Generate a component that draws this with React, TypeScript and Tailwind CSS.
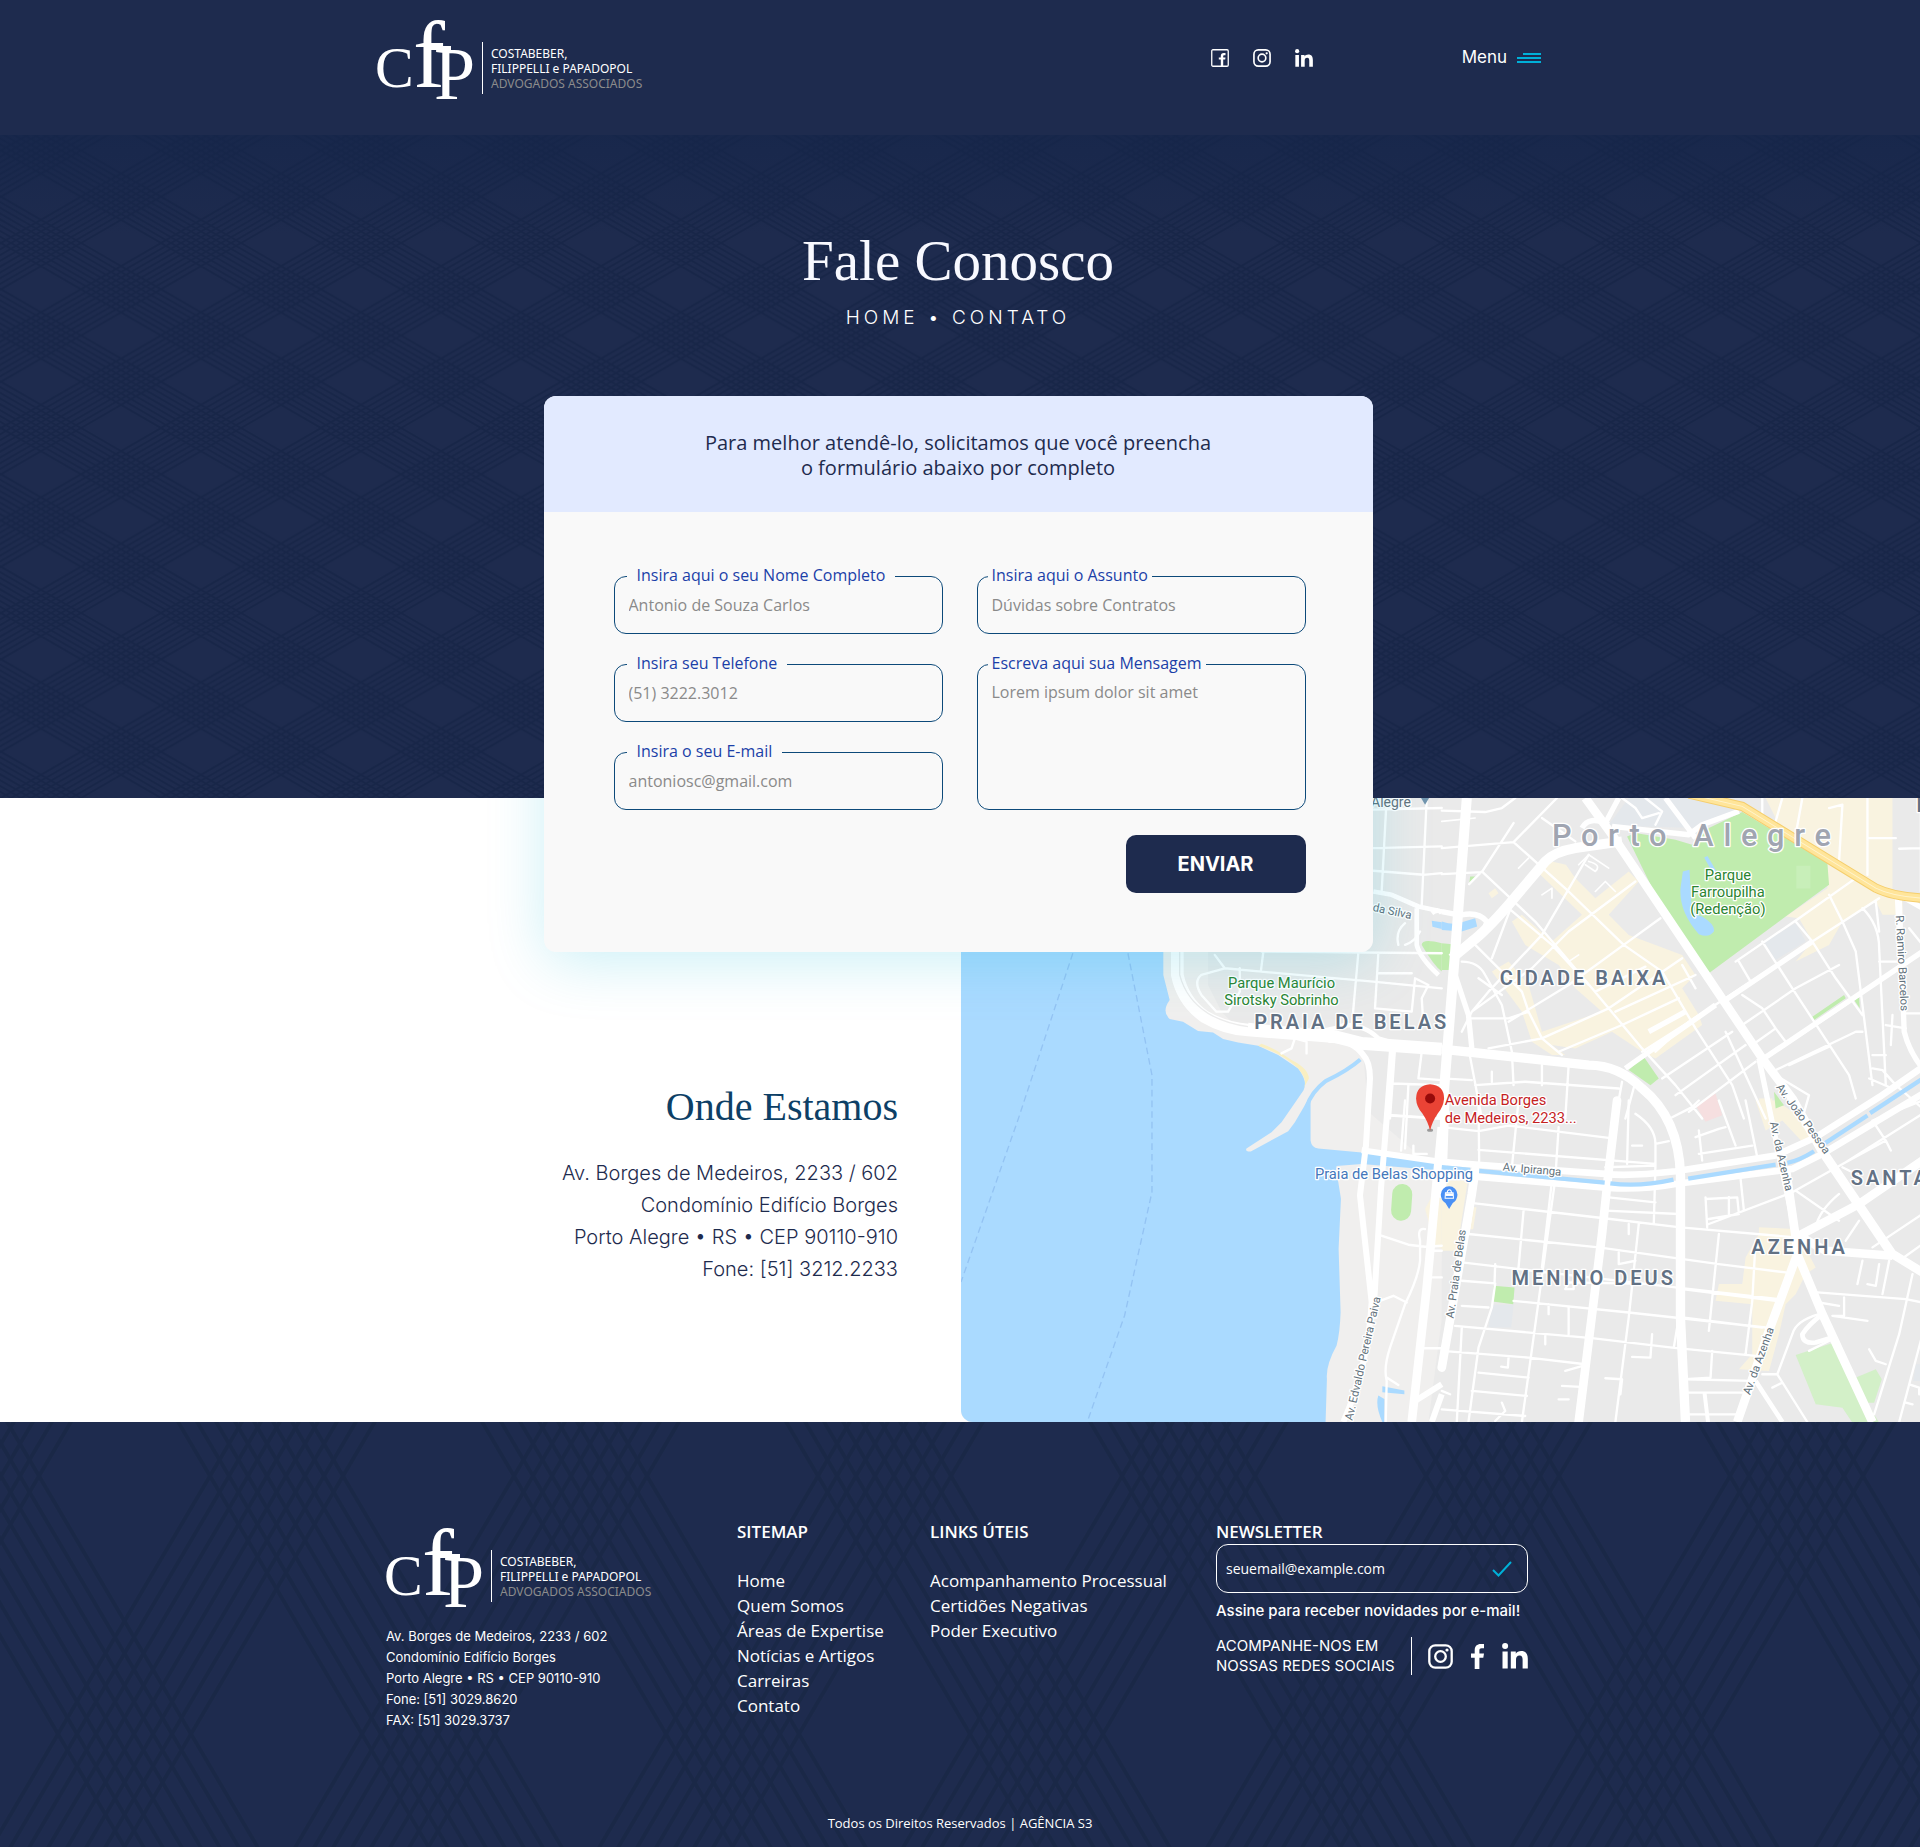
import React from "react";

const SANS = "font-['Inter',sans-serif]";
const BODY = "font-['Open_Sans',sans-serif]";
const SERIF = "font-['Liberation_Serif',serif]";

function HeroPattern() {
  const steps = [0, 10, 20, 30, 40, 50, 60, 70, 80];
  return (
    <svg className="absolute inset-0 h-full w-full" aria-hidden="true">
      <defs>
        <pattern id="lattice" width="160" height="92.5" patternUnits="userSpaceOnUse" patternTransform="translate(1 15.5)">
          <g stroke="#182648" strokeWidth="2">
            {steps.map((d) => (
              <path
                key={d}
                d={`M${d} 0l-160 92.5M${d + 160} 0l-160 92.5M${d} 0l160 92.5M${d - 160} 0l160 92.5`}
              />
            ))}
          </g>
        </pattern>
        <linearGradient id="heroShade" x1="0" y1="0" x2="0" y2="1">
          <stop offset="0" stopColor="#14254a" stopOpacity="0.6" />
          <stop offset="0.15" stopColor="#14254a" stopOpacity="0" />
        </linearGradient>
      </defs>
      <rect width="100%" height="100%" fill="url(#lattice)" />
      <rect width="100%" height="100%" fill="url(#heroShade)" />
    </svg>
  );
}

function FooterPattern() {
  const steps = [0, 19, 38, 57, 76, 95, 114, 133];
  return (
    <svg className="absolute inset-0 h-full w-full" aria-hidden="true">
      <defs>
        <pattern id="weave" width="304" height="516" patternUnits="userSpaceOnUse" patternTransform="translate(58 -204)">
          <g stroke="#1a2847" strokeWidth="4">
            {steps.map((d) => (
              <path
                key={d}
                d={`M${d} 0l-304 516M${d + 304} 0l-304 516M${d} 0l304 516M${d - 304} 0l304 516`}
              />
            ))}
          </g>
        </pattern>
      </defs>
      <rect width="100%" height="100%" fill="url(#weave)" />
    </svg>
  );
}

function Logo() {
  return (
    <svg className="h-[86px] w-[270px] text-white" viewBox="0 0 270 86" role="img" aria-label="Costabeber, Filippelli e Papadopol Advogados Associados">
      <g fill="currentColor" fontFamily="Liberation Serif, serif">
        <text x="-2" y="71" fontSize="58">C</text>
        <text x="36" y="71" fontSize="96">f</text>
        <text x="57" y="83" fontSize="74">P</text>
        <rect x="52" y="30" width="22" height="4" />
      </g>
      <rect x="105" y="26" width="1" height="52" fill="currentColor" />
      <g fontFamily="Noto Sans, sans-serif" fontSize="12">
        <text x="114" y="42" fill="currentColor">COSTABEBER,</text>
        <text x="114" y="57" fill="currentColor">FILIPPELLI e PAPADOPOL</text>
        <text x="114" y="72" fill="#8c8c8c">ADVOGADOS ASSOCIADOS</text>
      </g>
    </svg>
  );
}

function FacebookBox({ className }: { className: string }) {
  return (
    <svg className={className} viewBox="0 0 18 18" fill="none" aria-hidden="true">
      <rect x="0.75" y="0.75" width="16.5" height="16.5" rx="1.2" stroke="#fff" strokeWidth="1.3" />
      <path d="M9.8 17.2V10.600H7.800V8.400H9.800V6.900C9.800 5 10.900 4 12.700 4H14.500V6.200H13.300C12.500 6.200 12.200 6.600 12.200 7.300V8.400H14.500L14.200 10.600H12.200V17.200Z" fill="#fff" />
    </svg>
  );
}

function Instagram({ className }: { className: string }) {
  return (
    <svg className={className} viewBox="0 0 25 25" fill="none" aria-hidden="true">
      <rect x="1.300" y="1.300" width="22.400" height="22.400" rx="6" stroke="#fff" strokeWidth="2.300" />
      <circle cx="12.500" cy="12.500" r="5.300" stroke="#fff" strokeWidth="2.300" />
      <circle cx="19" cy="6" r="1.600" fill="#fff" />
    </svg>
  );
}

function Linkedin({ className }: { className: string }) {
  return (
    <svg className={className} viewBox="0 0 26 26" fill="#fff" aria-hidden="true">
      <circle cx="3.100" cy="3.100" r="3" />
      <path d="M.5 8.500H5.700V25.500H.5ZM8.800 8.500H13.800V10.800C14.800 9 16.700 8 19.200 8C24 8 25.800 11 25.800 15.800V25.500H20.600V16.800C20.600 14.200 20 12.600 17.600 12.600C15 12.600 14 14.400 14 16.900V25.500H8.800Z" />
    </svg>
  );
}

function FacebookF({ className }: { className: string }) {
  return (
    <svg className={className} viewBox="0 0 13 25" fill="#fff" aria-hidden="true">
      <path d="M3.700 25V13.800H0V9.400H3.700V6.200C3.700 2.200 6 0 9.800 0H13V4.300H10.600C8.900 4.300 8.400 5.100 8.400 6.500V9.400H13L12.300 13.800H8.400V25Z" />
    </svg>
  );
}

type FieldProps = { id: string; label: string; placeholder: string; type?: string; wide?: boolean; multiline?: boolean };

function Field({ id, label, placeholder, type = "text", wide, multiline }: FieldProps) {
  const control = `block w-full flex-1 resize-none bg-transparent px-3.5 text-base text-[#8a8a8a] outline-none placeholder:text-[#8a8a8a] ${BODY}`;
  return (
    <fieldset className={`flex w-full min-w-0 flex-col rounded-xl border border-[#0d4a7a] ${multiline ? "row-span-2" : "h-[70px]"}`}>
      <legend className={wide ? "ml-3 px-2.5" : "ml-2.5 px-1"}>
        <label htmlFor={id} className={`block pb-0.5 text-base leading-[22px] text-[#1b3fa8] ${BODY}`}>{label}</label>
      </legend>
      {multiline ? (
        <textarea id={id} placeholder={placeholder} className={`${control} pt-1`} />
      ) : (
        <input id={id} type={type} placeholder={placeholder} className={`${control} h-11 pb-3`} />
      )}
    </fieldset>
  );
}

/* Street map. One unit is a third of a CSS pixel; the sheet is split in four tiles. */
function CityMap() {
  const east = "translate(1440 0)";
  const south = "translate(0 906)";
  const southEast = "translate(1440 906)";
  return (
    <svg
      className="block h-full w-full"
      viewBox="0 0 2880 1869"
      preserveAspectRatio="xMinYMin slice"
      fontFamily="Roboto, sans-serif"
      role="img"
      aria-label="Mapa de Porto Alegre"
    >
      <rect width="2880" height="1869" fill="#eaeaea" />
      <path fill="#f0efee" d="M0 0H740V560L780 640L830 690L1200 720L1220 940L1440 1130V1360L1400 1869H0Z" />
      <path fill="#f0efee" d="M1390 1110H1440V1560L1400 1869H1200V1100Z" />
      <path
        fill="#aadaff"
        d="M0 0H606V530L625 605Q600 640 625 662L665 670L710 698L755 702L785 722L830 732L890 742L950 770L1010 810Q1040 850 1026 875L1005 906L960 971L930 1001L855 1050Q850 1060 868 1059L980 998L1000 971L1035 911L1047 906V1026Q1050 1048 1070 1050L1200 1062L1420 1090V1114L1200 1096L1125 1102Q1120 1120 1130 1150L1138 1200L1131 1350L1137 1540Q1135 1600 1125 1640Q1092 1700 1096 1740L1092 1869H0Z"
      />
      <g fill="none" stroke="#94c3f3" strokeWidth="4" strokeDasharray="20 12">
        <path d="M335 465L172 960L0 1450M500 465L572 830V1180L490 1550L378 1869" />
      </g>
      <path d="M890 742Q960 765 1010 810Q1040 845 1026 870L1042 840Q1040 810 990 785Q940 750 900 736Z" fill="#f9efc2" />
      <path d="M1035 925Q1050 880 1092 848Q1160 815 1196 783" fill="none" stroke="#aadaff" strokeWidth="12" />
      <path d="M1250 1790Q1240 1820 1262 1869H1268V1800ZM1262 1762L1328 1775V1786L1262 1780ZM1410 368L1440 372V392L1412 386Z" fill="#aadaff" />

      {/* commercial blocks */}
      <g fill="#f9f3e0">
        <g transform={east}>
          <path d="M290 225L330 190L372 200L400 240L460 300L560 220L590 250L500 350L560 410L640 440L720 470L760 530L720 570L770 650L780 680L640 780L600 760L510 700L400 750L330 740L370 770H330L270 730L240 640L150 520L200 490L260 560L300 700L480 640L400 570L350 500L250 440L210 370L240 350L330 430L420 350Z" />
          <path d="M1060 0H1350V280H1380V350H1320L1300 310L1200 370L1160 440L1060 490L1110 430L1070 360L1030 355L1155 270V200L1000 70ZM970 0H1060L1050 90L1000 60Z" />
          <path d="M140 285L160 270L170 285L150 300ZM950 900H990V960H965Z" />
        </g>
        <g transform={southEast}>
          <path d="M0 240H78L45 450H0ZM90 320H104L94 386H84ZM950 380L1060 385L1120 500L1090 520L1060 580L1030 610L1010 700L980 810L890 805L930 760V650L930 610L820 600L830 550H900L910 470L950 400ZM940 0H1000L1060 40L1120 110L1090 135L1020 60L970 90Z" />
        </g>
        <path d="M1390 1230L1440 1140V1350L1420 1340Z" />
      </g>
      <path transform={east} d="M500 80L560 0H740L840 10L890 40L770 90L600 85ZM965 430L1060 375L1090 430L1000 485Z" fill="#e4e8ec" />
      <path transform={southEast} d="M148 612H215L208 680H140ZM1420 790H1440V840H1412Z" fill="#e4e8ec" />
      <path transform={east} d="M760 920L820 885L840 950L790 970Z" fill="#f6dfe0" />

      {/* parks */}
      <g fill="#c0ecae">
        <g transform={east}>
          <path d="M555 115L580 105L700 125L750 140L800 90L900 42L1155 195L1160 260L1030 355L800 525L720 430L640 290ZM0 435L32 438L25 515H0ZM85 235H105L82 258ZM560 815L605 775L650 840L625 860ZM1110 655L1205 590L1210 600L1115 665ZM1235 605L1250 595L1252 630ZM995 880L1025 920L1000 930Z" />
          <rect x="1062" y="203" width="42" height="68" fill="#c8efb9" />
        </g>
        <path d="M1380 440Q1380 420 1440 435V520Q1415 500 1380 440Z" />
        <rect x="1290" y="1156" width="60" height="110" rx="30" transform="rotate(4 1320 1210)" />
        <g transform={southEast}>
          <path d="M155 555L218 560L214 610L152 602Z" />
          <path fill="#d3f0c8" d="M1060 762L1175 725L1240 850L1310 965H1230L1200 920L1120 910ZM1235 832L1300 805L1318 835L1295 905L1265 905Z" />
        </g>
      </g>
      <g transform={east} fill="#aadaff">
        <path d="M722 220L742 215L748 330Q755 350 780 355Q820 380 815 400Q800 420 770 408Q710 340 715 270ZM786 178L796 174L835 240L825 250ZM0 370Q30 380 50 375L100 360L106 385L60 400L0 395Z" />
      </g>

      {/* minor streets */}
      <g fill="none" stroke="#fff" strokeWidth="7" strokeLinejoin="round" strokeLinecap="round">
        <path d="M1275 0L1260 280M1395 0L1380 320M1235 150L1440 145M1235 218L1385 230L1440 225M1235 35L1440 30M905 465L898 520L1235 550L1440 570M1190 465L1170 690M760 470L790 510L900 520M790 510L720 530Q695 550 720 590L765 640H800L835 580V510M1250 465L1240 630L1350 640L1360 540L1400 560L1380 600L1385 680M900 460L1440 465M1250 525H1350M1300 750L1285 960M1380 760L1370 840L1440 845M1290 855L1440 860M960 765L990 750L1000 720L1035 730V765M1340 860L1330 1050M1290 950L1440 960M1310 440Q1300 400 1330 375M1330 440Q1360 430 1375 400" />
        <g transform={east}>
          <path d="M0 38L130 42L180 30L220 0M0 150L215 132L345 0M215 132L380 280L545 440L660 520L760 690L870 860L905 960M120 220L280 370L450 570L600 750L700 860L780 960M0 228L120 222L215 75M82 258L120 220M300 60L400 130M440 170L300 410L140 580L90 640M210 320L150 480M580 250L380 400L270 510L90 640L60 700M655 360L545 440L380 560L200 670M610 505L460 580M720 480L500 630L300 720L140 750M760 530L520 640M710 600L540 680L350 760M820 620L600 760M100 440L240 580L260 640L300 720L360 770M200 330L330 440L440 560M90 660L200 660L260 640M60 490Q110 490 130 530L180 620L210 760M210 760L215 860M300 800V860M380 800L370 960M100 860L250 850L530 870M80 750L120 960M0 840L90 845M180 590L110 540M540 850L520 960M580 850L550 960M150 820V850M890 490L925 550M850 600L1110 430L1310 300M880 490L1070 360L1240 240M960 430L1050 570L1220 830L1240 900M1060 370L1110 430L1180 540L1260 650M900 680L1060 570L1190 500M970 780L1150 660L1440 460M930 740L1000 690L960 630L900 590M1000 690L1030 730M850 600L740 670L640 760M870 700L660 840M910 740L700 890M940 790L740 940M1160 290L1200 370L1240 460L1290 860M1260 330Q1310 380 1310 450L1330 860M1300 310L1310 400M1000 815L1240 700L1260 700M1040 800L1160 745M1160 30L1200 20L1190 190M1275 0V230M1280 120H1360M1080 0L1060 110M1020 0L1000 70M960 0V50M1440 150L1370 152M1435 0V280M1360 290L1370 490H1310M1400 390L1440 440M1390 645H1440M1330 680L1390 690M1290 770H1330M1350 650L1345 740M1290 810L1320 815L1360 860L1440 930M1280 840L1350 870M1000 830L1100 890L1080 960M850 700L970 960M540 0L580 30L600 60L650 45M610 0L660 40L640 80M720 500L760 570" />
          <path d="M410 200L440 170L500 210M440 190Q480 200 460 220L430 200M300 290L330 270L330 300M460 280L490 250L520 280M100 60L0 70M230 210L260 180M380 490L410 470" strokeWidth="5" />
        </g>
        <g transform={south}>
          <path d="M1285 45L1440 55M1330 0L1318 150M1355 135V160H1395M1250 402L1340 432L1390 438L1440 435M1390 385Q1365 380 1375 420V480Q1370 530 1330 610L1285 740Q1265 800 1275 840L1272 963M1255 600L1295 585L1335 605M1275 830L1310 852M1390 530H1440M1380 742H1440M1400 450H1440" />
        </g>
        <g transform={southEast}>
          <path d="M0 80L110 92L200 75L500 112M110 148L640 190M110 0L112 180L80 400M230 0L210 200M350 80L340 235L290 600L240 963M560 0L555 190M490 200L640 195L635 370M500 290L640 305M490 330L710 340M100 308L480 352L715 380L1060 410M80 400L470 440L830 490L1030 515M60 485L700 560L1010 595M215 600L560 635L970 680M40 675L450 712L690 740L940 765M0 750L260 770L430 790M110 815L260 830M90 870L255 885M0 925L250 945M60 615L140 620M60 540L160 548L150 620L110 740L80 963M160 490L158 548M245 330L230 500M330 240L300 500M590 370L560 650L520 963M580 480L530 490V455M560 370V400M640 550L380 545L370 565H395V540M380 620V700M310 700V730M320 610V640M720 590L695 740M630 700L625 770L570 768M200 770L198 800L178 797M360 855L415 858M440 790L370 810M490 832L540 835L535 880M180 905L190 930L160 960M350 895L380 895M60 680L45 963M0 870L25 880M830 400L800 690M940 420L930 600L910 760M810 750L805 830L730 835L930 840M730 875H900M785 880L795 963M735 940H880M720 650L960 680M720 565L1000 600M770 160L930 135M760 110L830 85L850 80M690 50L750 20L770 0M830 0L880 135M910 0L945 170M770 90L780 180M580 40Q640 80 640 130V195M640 130L680 122M570 135H600M790 290L795 380M790 295L885 290L890 340L800 355M860 290V340M800 370L1050 275L1210 185L1440 40M895 235L905 330M1060 270L1190 360M1190 280Q1130 330 1120 380M1250 360L1210 420M1200 200L1230 215L1250 240M1210 185L1330 120L1345 150M1330 120L1290 60L1440 0M1125 575L1390 595L1440 605M1260 480L1245 550M1340 480L1320 580M1310 490L1300 555L1275 550M1410 520L1370 700L1295 940M1440 700L1370 963M1130 605L1190 615M1205 590V645L1170 645L1275 660M1130 640Q1060 660 1050 700L1005 820L1095 963M1100 750L1170 715M1280 745L1300 780L1330 790M1400 850L1430 860V880M1390 905L1410 910M1005 820H960M990 860L1020 845M1370 480L1440 430M1290 440L1440 340M800 963L790 880" />
        </g>
      </g>

      {/* avenues */}
      <g fill="none" stroke="#fff" strokeLinejoin="round">
        <path strokeWidth="38" d="M648 440V530Q665 610 730 655Q790 690 860 695L1120 715L1200 735L1440 752" />
        <path strokeWidth="4" stroke="#ececec" d="M655 440V530Q675 605 740 645Q790 675 860 685" />
        <path strokeWidth="14" d="M860 680L1040 700Q1100 700 1150 680Q1210 680 1250 720L1300 735M1140 710Q1150 740 1195 735M1235 280L1290 290L1370 325L1440 340M1365 330V440Q1375 480 1430 530M1410 345Q1430 330 1440 345" />
        <path strokeWidth="18" d="M1100 725Q1170 720 1205 770Q1225 790 1225 840L1213 1040L1195 1190L1230 1510Q1220 1700 1145 1869M1292 740L1275 960L1258 1170L1238 1500V1560M1200 1055L1440 1090" />
        <g transform={east}>
          <path strokeWidth="30" d="M75 0L40 460L0 960" />
          <path strokeWidth="26" d="M430 0L510 110L960 780L1050 900L1140 1060L1350 1370" />
          <path strokeWidth="30" d="M30 480L90 430Q130 400 200 320L310 190Q340 160 400 150L540 130" />
          <path strokeWidth="28" d="M0 752L440 800Q530 800 600 870Q710 960 715 1130V1560L730 1869" />
          <path strokeWidth="16" d="M490 75L530 0M510 85L740 110L780 80L890 40M670 0L760 120M820 620L550 810M730 640L620 700M1110 430L850 605M1440 460L950 790M1370 300L1385 700Q1400 760 1440 810M60 350Q110 340 135 370Q130 400 90 430M0 340L50 350M40 530L80 650L90 750M420 90Q440 50 500 80M950 780L1060 1310M1440 330L1370 290" />
        </g>
        <g transform={southEast}>
          <path strokeWidth="26" d="M10 0L0 280M100 210L90 280L0 800M525 0L500 210L480 400L410 963" strokeLinecap="round" />
          <path strokeWidth="20" d="M0 184L100 192L490 220Q560 228 700 212L1000 165L1120 110L1310 -10L1440 -100M0 230L100 228L500 262Q600 268 700 250L1050 205L1140 160L1440 -20" />
          <path strokeWidth="26" d="M1140 150L1350 460L1440 515M1060 410L1250 310L1440 180M1030 200L1060 410L1065 460L980 690L885 963M1065 460L1140 640L1290 963M1060 400L1150 450L1350 465" />
          <path strokeWidth="14" d="M940 840L1020 963M1140 640Q1100 670 1080 700Q1080 730 1120 725L1170 710" />
        </g>
        <g transform={south}>
          <path strokeWidth="26" d="M1440 80L1395 560L1350 963" />
          <path strokeWidth="18" d="M1360 900L1440 850M1410 963L1440 880" />
        </g>
      </g>
      <g fill="none" stroke="#aadaff" strokeWidth="13">
        <path transform={southEast} d="M0 200L85 208M112 211L488 246M505 248Q590 260 694 237M738 234L1000 192M1035 187Q1070 180 1115 152M1145 130L1275 45M1283 38L1440 -65" />
      </g>
      <path d="M2180 -12L2340 25L2740 270Q2790 295 2880 300" fill="none" stroke="#f5ce6d" strokeWidth="28" />
      <path d="M2180 -12L2340 25L2740 270Q2790 295 2880 300" fill="none" stroke="#ffe59a" strokeWidth="22" />
      <path d="M2180 -12L2340 25L2740 270Q2790 295 2880 300" fill="none" stroke="#fff3cd" strokeWidth="3" />

      {/* labels */}
      <g stroke="#fff" strokeWidth="8" strokeLinejoin="round" paintOrder="stroke">
        <g fill="#627184" fontSize="60" fontWeight="600">
          <text x="878" y="693" letterSpacing="9">PRAIA DE BELAS</text>
          <text x="1614" y="560" letterSpacing="9">CIDADE BAIXA</text>
          <text x="1649" y="1459" letterSpacing="9">MENINO DEUS</text>
          <text x="2367" y="1366" letterSpacing="9">AZENHA</text>
          <text x="2665" y="1160" letterSpacing="9">SANTA</text>
          <text x="2862" y="42">R</text>
        </g>
        <text x="1770" y="145" fontSize="92" fontWeight="500" fill="#a0a5b1" letterSpacing="29">Porto Alegre</text>
        <g fill="#2a8431" fontSize="44" textAnchor="middle">
          <text x="960" y="568">Parque Maurício</text>
          <text x="960" y="619">Sirotsky Sobrinho</text>
          <text x="2297" y="245">Parque</text>
          <text x="2297" y="296">Farroupilha</text>
          <text x="2297" y="347">(Redenção)</text>
        </g>
        <g fill="#c5221f" fontSize="44">
          <text x="1449" y="921">Avenida Borges</text>
          <text x="1449" y="972">de Medeiros, 2233...</text>
        </g>
        <text x="1060" y="1141" fill="#4477bb" fontSize="44">Praia de Belas Shopping</text>
        <g fill="#63727c" fontSize="34">
          <text x="1228" y="28" fontSize="42">Alegre</text>
          <text transform="translate(1232 338) rotate(12)">da Silva</text>
          <text transform="translate(1622 1116) rotate(5)">Av. Ipiranga</text>
          <text transform="translate(1172 1866) rotate(-77)">Av. Edvaldo Pereira Paiva</text>
          <text transform="translate(1475 1560) rotate(-82)">Av. Praia de Belas</text>
          <text transform="translate(2800 352) rotate(87)">R. Ramiro Barcelos</text>
          <text transform="translate(2440 866) rotate(54)">Av. João Pessoa</text>
          <text transform="translate(2422 972) rotate(77)">Av. da Azenha</text>
          <text transform="translate(2363 1790) rotate(-70)">Av. da Azenha</text>
        </g>
      </g>
      <path d="M1378 0H1402L1390 20Z" fill="#7195ae" />

      {/* pins */}
      <ellipse cx="1405" cy="995" rx="9" ry="5" fill="#9a9a9a" />
      <path d="M1405 857Q1447 860 1447 900Q1445 925 1428 945Q1411 970 1405 996Q1399 970 1382 945Q1364 925 1363 900Q1364 860 1405 857Z" fill="#ea4335" />
      <circle cx="1405" cy="900" r="15" fill="#960a0a" />
      <path d="M1462 1163A25 25 0 0 1 1487 1188Q1486 1205 1473 1213L1462 1231L1451 1213Q1438 1205 1437 1188A25 25 0 0 1 1462 1163Z" fill="#4a90f5" />
      <path d="M1451 1182H1474L1475 1199H1450ZM1456 1182Q1457 1173 1463 1173Q1469 1173 1469 1182" fill="none" stroke="#fff" strokeWidth="3" />
      <path d="M1451 1184H1474V1192H1451Z" fill="#fff" />
    </svg>
  );
}

function LinkColumn({ title, links }: { title: string; links: string[] }) {
  return (
    <nav aria-label={title} className={BODY}>
      <h3 className="text-[17px] leading-6 font-semibold">{title}</h3>
      <ul className="mt-6 text-[17px] leading-[25px]">
        {links.map((l) => (
          <li key={l}><a href="#" className="whitespace-nowrap">{l}</a></li>
        ))}
      </ul>
    </nav>
  );
}

export default function App() {
  return (
    <div className={`bg-white text-white ${SANS}`}>
      <header className="bg-[#1e2b4e]">
        <div className="mx-auto flex h-[135px] max-w-[1166px] items-start pt-4 pr-0.5">
          <a href="#"><Logo /></a>
          <div className="ml-auto flex h-[84px] items-center">
            <nav aria-label="Redes sociais" className="flex items-center gap-6">
              <a href="#" aria-label="Facebook"><FacebookBox className="size-[18px]" /></a>
              <a href="#" aria-label="Instagram"><Instagram className="size-[18px]" /></a>
              <a href="#" aria-label="LinkedIn"><Linkedin className="size-[18px]" /></a>
            </nav>
            <button type="button" className="ml-[149px] flex items-center gap-2.5 text-[17px]">
              Menu
              <span className="flex w-6 flex-col items-end gap-0.5">
                <span className="h-0.5 w-[18px] bg-[#00b0d8]" />
                <span className="h-0.5 w-6 bg-[#00b0d8]" />
                <span className="h-0.5 w-6 bg-[#00b0d8]" />
              </span>
            </button>
          </div>
        </div>
      </header>

      <main>
        <section className="relative z-10 flex flex-col items-center bg-[#1e2b4e] pt-24 pr-1">
          <HeroPattern />
          <h1 className={`relative text-[57px] leading-[60px] text-[#f8f9ff] ${SERIF}`}>Fale Conosco</h1>
          <p className="relative mt-[13px] text-[19px] leading-7 font-light tracking-[4px]">HOME • CONTATO</p>
          <form className="relative mt-16 -mb-[154px] w-full max-w-[829px] rounded-xl bg-[#f9f9f9]">
            <p className={`rounded-t-xl bg-[#e2eaff] pt-[34px] pb-8 text-center text-xl leading-[25px] text-[#1e2b4e] ${BODY}`}>
              Para melhor atendê-lo, solicitamos que você preencha
              <br />
              o formulário abaixo por completo
            </p>
            <div className="pt-[52px] pr-[67px] pb-[59px] pl-[70px]">
              <div className="grid grid-cols-2 grid-rows-3 gap-x-[34px] gap-y-[18px]">
                <Field id="nome" label="Insira aqui o seu Nome Completo" placeholder="Antonio de Souza Carlos" wide />
                <Field id="assunto" label="Insira aqui o Assunto" placeholder="Dúvidas sobre Contratos" />
                <Field id="telefone" type="tel" label="Insira seu Telefone" placeholder="(51) 3222.3012" wide />
                <Field id="mensagem" label="Escreva aqui sua Mensagem" placeholder="Lorem ipsum dolor sit amet" multiline />
                <Field id="email" type="email" label="Insira o seu E-mail" placeholder="antoniosc@gmail.com" wide />
              </div>
              <button type="button" className="mt-[25px] ml-auto block h-[58px] w-[180px] rounded-[10px] bg-[#1e2b4e] text-xl font-bold">
                ENVIAR
              </button>
            </div>
          </form>
        </section>

        <section className="relative grid grid-cols-2 overflow-hidden">
          <div className="flex flex-col items-end px-[62px] pt-[286px] pb-[137px] text-right">
            <h2 className={`text-[40px] leading-[46px] text-[#0d3f66] ${SERIF}`}>Onde Estamos</h2>
            <address className="mt-[27px] text-xl leading-8 font-light text-[#1e2b4e] not-italic">
              Av. Borges de Medeiros, 2233 / 602
              <br />
              Condomínio Edifício Borges
              <br />
              Porto Alegre • RS • CEP 90110-910
              <br />
              Fone: [51] 3212.2233
            </address>
          </div>
          <div className="relative ml-px overflow-hidden rounded-bl-xl">
            <div className="absolute inset-0"><CityMap /></div>
          </div>
          <div
            aria-hidden="true"
            className="pointer-events-none absolute inset-x-0 -top-24 mx-auto h-[250px] max-w-[826px] rounded-xl shadow-[0_8px_60px_rgba(0,180,215,0.22)]"
          />
        </section>
      </main>

      <footer className="relative bg-[#1e2b4e]">
        <FooterPattern />
        <div className="relative mx-auto grid max-w-[1148px] grid-cols-[351px_193px_286px_312px] pt-[98px]">
          <div className="pt-1">
            <Logo />
            <address className="mt-4 text-[13px] leading-[21px] not-italic">
              Av. Borges de Medeiros, 2233 / 602
              <br />
              Condomínio Edifício Borges
              <br />
              Porto Alegre • RS • CEP 90110-910
              <br />
              Fone: [51] 3029.8620
              <br />
              FAX: [51] 3029.3737
            </address>
          </div>
          <LinkColumn title="SITEMAP" links={["Home", "Quem Somos", "Áreas de Expertise", "Notícias e Artigos", "Carreiras", "Contato"]} />
          <LinkColumn title="LINKS ÚTEIS" links={["Acompanhamento Processual", "Certidões Negativas", "Poder Executivo"]} />
          <form>
            <label htmlFor="news" className={`block text-[17px] leading-6 font-semibold ${BODY}`}>NEWSLETTER</label>
            <div className="flex h-[49px] items-center rounded-xl border border-white pr-[15px] pl-[9px]">
              <input id="news" type="email" placeholder="seuemail@example.com" className={`min-w-0 flex-1 bg-transparent text-sm outline-none placeholder:text-white ${BODY}`} />
              <button type="button" aria-label="Assinar">
                <svg className="h-4 w-5" viewBox="0 0 20 16" fill="none" stroke="#00b0d8" strokeWidth="2" aria-hidden="true">
                  <path d="M1 9L6.500 14.500L19 1" />
                </svg>
              </button>
            </div>
            <p className="mt-2 text-[15px] leading-5 font-medium whitespace-nowrap">Assine para receber novidades por e-mail!</p>
            <div className="mt-[15px] flex items-center">
              <p className="text-[15px] leading-5 whitespace-nowrap">
                ACOMPANHE-NOS EM
                <br />
                NOSSAS REDES SOCIAIS
              </p>
              <div className="ml-auto flex items-center justify-between gap-[18px] border-l border-white py-1.5 pl-4">
                <a href="#" aria-label="Instagram"><Instagram className="size-[25px]" /></a>
                <a href="#" aria-label="Facebook"><FacebookF className="h-[25px] w-[13px]" /></a>
                <a href="#" aria-label="LinkedIn"><Linkedin className="size-[26px]" /></a>
              </div>
            </div>
          </form>
        </div>
        <p className={`relative pt-[82px] pb-[14px] text-center text-[13px] leading-5 ${BODY}`}>Todos os Direitos Reservados | AGÊNCIA S3</p>
      </footer>
    </div>
  );
}
